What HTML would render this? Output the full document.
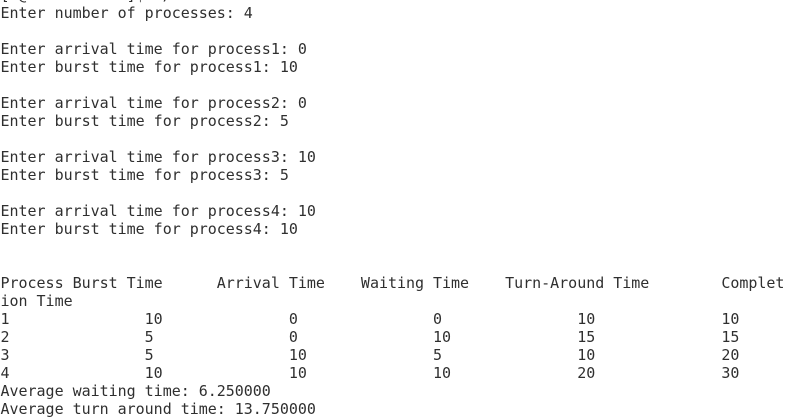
<!DOCTYPE html>
<html><head><style>
body{margin:0;background:#fff;width:788px;height:415px;overflow:hidden;position:relative}
pre{position:absolute;left:0.5px;top:-14px;margin:0;font-family:"DejaVu Sans Mono","Liberation Mono",monospace;font-size:15px;line-height:18px;letter-spacing:-0.02px;color:#2f2f2f}
</style></head><body><pre>[s@localhost ~]$ ./a.out
Enter number of processes: 4

Enter arrival time for process1: 0
Enter burst time for process1: 10

Enter arrival time for process2: 0
Enter burst time for process2: 5

Enter arrival time for process3: 10
Enter burst time for process3: 5

Enter arrival time for process4: 10
Enter burst time for process4: 10


Process Burst Time      Arrival Time    Waiting Time    Turn-Around Time        Complet
ion Time
1               10              0               0               10              10
2               5               0               10              15              15
3               5               10              5               10              20
4               10              10              10              20              30
Average waiting time: 6.250000
Average turn around time: 13.750000</pre></body></html>
